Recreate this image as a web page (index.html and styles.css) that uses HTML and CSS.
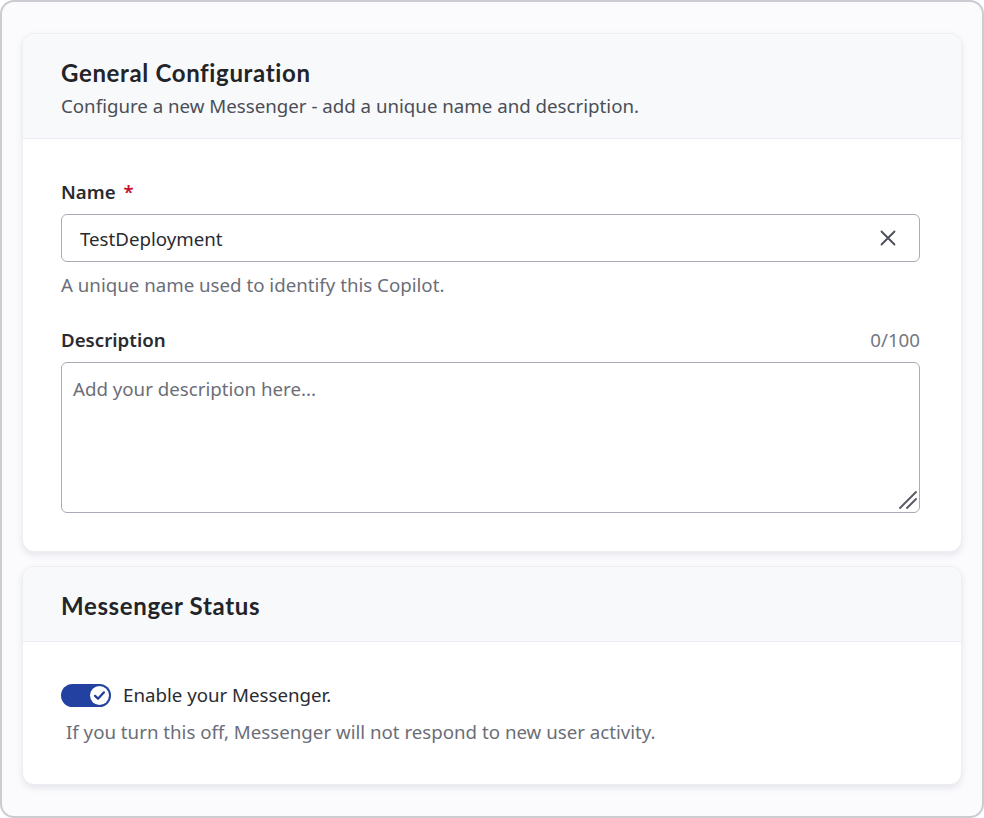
FILE: index.html
```html
<!DOCTYPE html>
<html lang="en">
<head>
  <meta charset="UTF-8">
  <title>Messenger Settings</title>
  <link rel="stylesheet" href="styles.css">
</head>
<body>
  <div class="frame">

    <!-- General configuration card -->
    <section class="card">
      <div class="card-header">
        <h2>General Configuration</h2>
        <p>Configure a new Messenger - add a unique name and description.</p>
      </div>
      <div class="card-body">
        <label class="label" for="nameInput">Name <span class="req">*</span></label>
        <div class="field">
          <input type="text" id="nameInput" value="TestDeployment">
          <button class="clear" type="button" aria-label="Clear">
            <svg width="20" height="20" viewBox="0 0 20 20" fill="none" stroke="#4a4d55" stroke-width="1.8" stroke-linecap="round">
              <path d="M3.5 3.5 L16.5 16.5 M16.5 3.5 L3.5 16.5"/>
            </svg>
          </button>
        </div>
        <div class="help">A unique name used to identify this Copilot.</div>

        <div class="label-row">
          <label class="label" for="descInput">Description</label>
          <span class="count">0/100</span>
        </div>
        <div class="area">
          <textarea id="descInput" placeholder="Add your description here..."></textarea>
          <svg class="grip" width="20" height="20" viewBox="0 0 20 20" stroke="#5a5d66" stroke-width="2" stroke-linecap="round">
            <path d="M2 18 L18 2 M9 18 L18 9"/>
          </svg>
        </div>
      </div>
    </section>

    <!-- Status card -->
    <section class="card">
      <div class="card-header status-header">
        <h2>Messenger Status</h2>
      </div>
      <div class="card-body status-body">
        <div class="toggle-row">
          <span class="toggle on">
            <span class="knob">
              <svg width="13" height="13" viewBox="0 0 14 14" fill="none" stroke="#203c98" stroke-width="2.4" stroke-linecap="round" stroke-linejoin="round">
                <path d="M2.2 7.4 L5.4 10.4 L11.8 3.6"/>
              </svg>
            </span>
          </span>
          <span class="toggle-text">Enable your Messenger.</span>
        </div>
        <div class="help status-help">If you turn this off, Messenger will not respond to new user activity.</div>
      </div>
    </section>

  </div>
</body>
</html>
```

FILE: styles.css
```css
html, body {
  margin: 0;
  height: 100%;
}

body {
  font-family: 'Noto Sans', sans-serif;
  font-size: 18.7px;
  color: #2a2b30;
  background: #ffffff;
}

.frame {
  box-sizing: border-box;
  height: 818px;
  border: 2px solid #cbccd2;
  border-radius: 14px;
  background: #fbfbfd;
  padding: 31px 20px;
  display: flex;
  flex-direction: column;
  gap: 14px;
}

/* Cards */
.card {
  background: #fff;
  border: 1px solid #eceef3;
  border-radius: 12px;
  box-shadow: 0 3px 6px rgba(40, 50, 90, 0.10);
  overflow: hidden;
}

.card-header {
  background: #f8f9fb;
  border-bottom: 1px solid #eceef3;
  padding: 25px 41px 19px 38px;
}

.card-header h2 {
  margin: 0;
  font-family: 'Lato', sans-serif;
  font-weight: 700;
  font-size: 24px;
  letter-spacing: 0.65px;
  line-height: 28px;
  color: #232428;
}

.card-header p {
  margin: 6px 0 0;
  line-height: 26px;
  color: #4b4e57;
}

.status-header {
  padding-top: 25px;
  padding-bottom: 21px;
}

.card-body {
  padding: 40px 41px 38px 38px;
}

/* Form bits */
.label {
  display: block;
  font-weight: 600;
  line-height: 26px;
  color: #2a2b30;
}

.req {
  color: #c8102e;
  margin-left: 3px;
}

.label-row {
  display: flex;
  justify-content: space-between;
  align-items: center;
  margin-top: 29px;
}

.count {
  color: #74777f;
  line-height: 26px;
}

.field {
  margin-top: 9px;
  height: 48px;
  box-sizing: border-box;
  border: 1px solid #a8acb6;
  border-radius: 6px;
  display: flex;
  align-items: center;
  padding: 0 21px 0 18px;
}

.field input {
  flex: 1;
  border: none;
  outline: none;
  font-family: inherit;
  font-size: inherit;
  color: #2a2b30;
  padding: 0;
  background: transparent;
}

.clear {
  background: none;
  border: none;
  padding: 0;
  display: flex;
  cursor: pointer;
}

.help {
  margin-top: 10px;
  line-height: 26px;
  color: #6b6e78;
}

.area {
  position: relative;
  margin-top: 9px;
}

.area textarea {
  display: block;
  width: 100%;
  height: 151px;
  box-sizing: border-box;
  border: 1px solid #a8acb6;
  border-radius: 6px;
  padding: 13px 11px;
  font-family: inherit;
  font-size: inherit;
  line-height: 26px;
  color: #2a2b30;
  resize: none;
  outline: none;
}

.area textarea::placeholder {
  color: #6b6e78;
}

.grip {
  position: absolute;
  right: 2px;
  bottom: 3px;
}

/* Status toggle */
.status-body {
  padding-top: 41px;
  padding-bottom: 39px;
}

.toggle-row {
  display: flex;
  align-items: center;
  gap: 12px;
}

.toggle {
  width: 50px;
  height: 23px;
  border-radius: 12px;
  background: #2341a0;
  display: flex;
  align-items: center;
  justify-content: flex-end;
  padding: 0 2px;
  box-sizing: border-box;
}

.knob {
  width: 19px;
  height: 19px;
  border-radius: 50%;
  background: #fff;
  display: flex;
  align-items: center;
  justify-content: center;
}

.toggle-text {
  line-height: 24px;
  color: #2a2b30;
}

.status-help {
  margin-top: 12px;
  padding-left: 5px;
}
```
